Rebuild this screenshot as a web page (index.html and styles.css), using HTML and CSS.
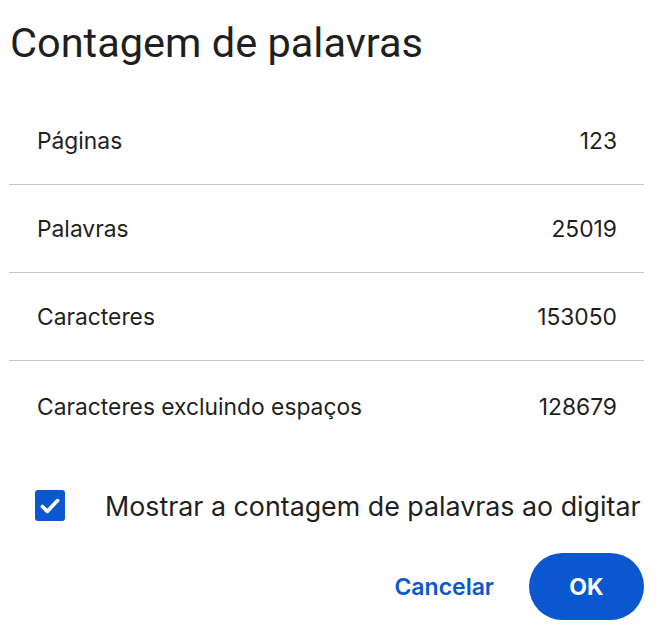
FILE: index.html
```html
<!DOCTYPE html>
<html lang="pt">
<head>
<meta charset="utf-8">
<title>Contagem de palavras</title>
<link rel="stylesheet" href="styles.css">
</head>
<body>
<div class="dialog">
  <h1 class="title">Contagem de palavras</h1>
  <div class="stats">
    <div class="row"><span>Páginas</span><span>123</span></div>
    <div class="row"><span>Palavras</span><span>25019</span></div>
    <div class="row"><span>Caracteres</span><span>153050</span></div>
    <div class="row"><span>Caracteres excluindo espaços</span><span>128679</span></div>
  </div>
  <label class="check">
    <span class="box">
      <svg viewBox="0 0 24 24" width="26" height="26"><path d="M5 12.5l4.5 4.5L19 7" fill="none" stroke="#fff" stroke-width="3.4" stroke-linecap="round" stroke-linejoin="round"/></svg>
    </span>
    <span class="check-label">Mostrar a contagem de palavras ao digitar</span>
  </label>
  <div class="actions">
    <button class="btn-text">Cancelar</button>
    <button class="btn-ok">OK</button>
  </div>
</div>
</body>
</html>
```

FILE: styles.css
```css
html, body {
  margin: 0;
  padding: 0;
  background: #fff;
}
.dialog {
  width: 662px;
  height: 638px;
  font-family: Inter, Roboto, "Liberation Sans", sans-serif;
  color: #1f1f1f;
}
.title {
  margin: 0;
  padding: 18px 0 0 10px;
  height: 96px;
  box-sizing: border-box;
  font-family: Roboto, "Liberation Sans", sans-serif;
  font-size: 41.5px;
  font-weight: 400;
  line-height: 50px;
}
.stats {
  margin: 0 18px 0 9px;
}
.row {
  display: flex;
  justify-content: space-between;
  align-items: center;
  box-sizing: border-box;
  height: 88px;
  padding: 0 27px 0 28px;
  font-size: 22.8px;
  color: #1f1f1f;
  border-bottom: 1.5px solid #c7c7c7;
}
.row:first-child {
  height: 89px;
}
.row:last-child {
  border-bottom: none;
  height: 91px;
}
.check {
  display: flex;
  align-items: center;
  gap: 40px;
  box-sizing: border-box;
  height: 101px;
  padding: 6px 0 0 35px;
}
.box {
  width: 30px;
  height: 31px;
  border-radius: 3px;
  background: #0b57d0;
  display: flex;
  align-items: center;
  justify-content: center;
}
.check-label {
  font-size: 26.8px;
  color: #1f1f1f;
}
.actions {
  display: flex;
  justify-content: flex-end;
  align-items: center;
  gap: 35px;
  padding-right: 18px;
}
.btn-text {
  border: none;
  background: none;
  padding: 0;
  font-family: inherit;
  font-size: 23px;
  font-weight: 600;
  color: #0b57d0;
}
.btn-ok {
  border: none;
  width: 115px;
  height: 67px;
  border-radius: 34px;
  background: #0b57d0;
  color: #fff;
  font-family: inherit;
  font-size: 23px;
  font-weight: 700;
}
```
